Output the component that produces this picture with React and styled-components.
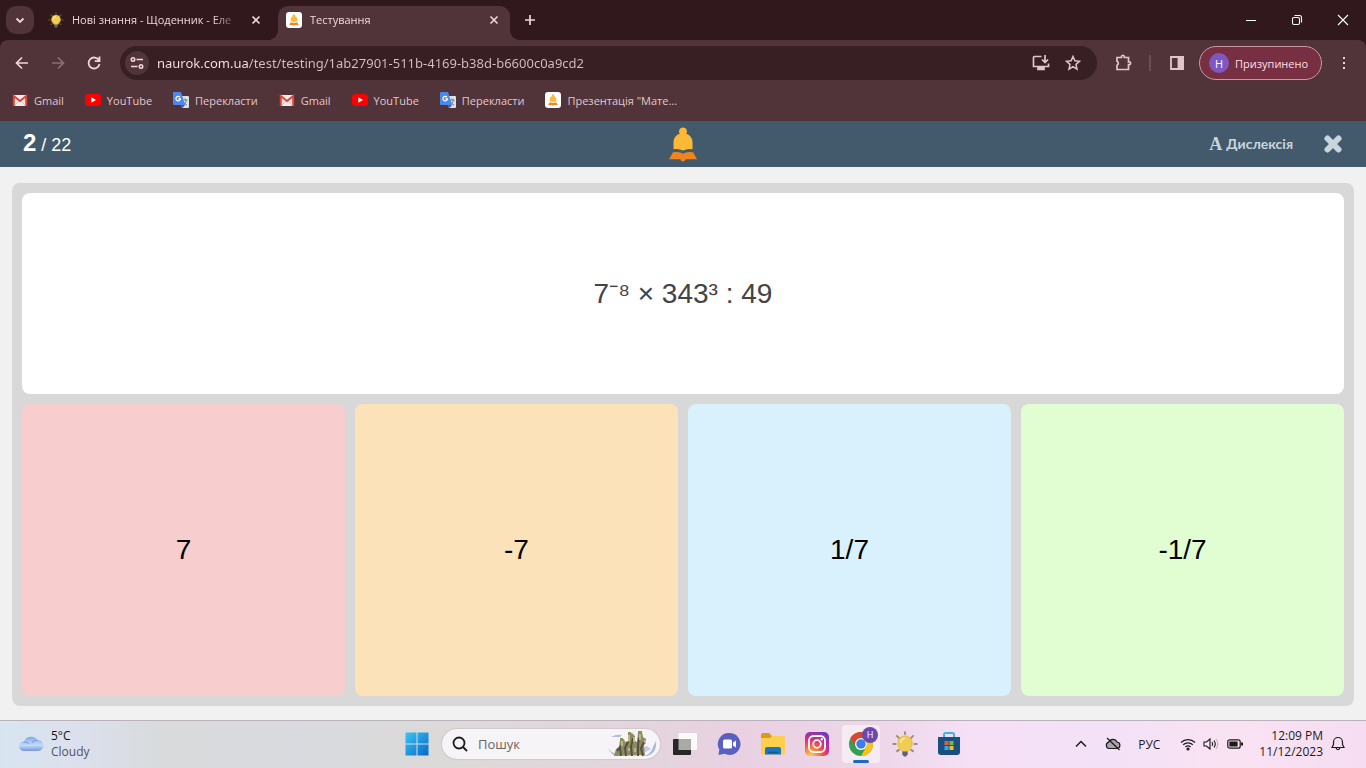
import React, { useState } from 'react';
import styled, { createGlobalStyle } from 'styled-components';

const GlobalStyle = createGlobalStyle`
  * {
    box-sizing: border-box;
  }

  body {
    margin: 0;
    font-family: 'Open Sans', 'Noto Sans', sans-serif;
    font-size: 12px;
  }

  button, input {
    font-family: inherit;
    font-size: inherit;
    color: inherit;
    border: 0;
    padding: 0;
    margin: 0;
    background: none;
    outline: none;
  }

  button {
    cursor: pointer;
  }

  svg {
    display: block;
    flex: none;
  }
`;

const Screen = styled.div`
  display: flex;
  flex-direction: column;
  min-height: 100vh;
  background: #f1f1f1;
`;

/* ---------- browser ---------- */

const Browser = styled.header`
  background: #30181d;
  color: #f0d5d9;
  font-size: 11px;
`;

const TabStrip = styled.div`
  display: flex;
  align-items: flex-end;
  height: 40px;
  padding-left: 6px;
`;

const TabSearch = styled.button`
  display: flex;
  align-items: center;
  justify-content: center;
  width: 28px;
  height: 28px;
  margin: 0 6px 6px 0;
  border-radius: 10px;
  background: #513439;
`;

const Tab = styled.div`
  position: relative;
  display: flex;
  align-items: center;
  gap: 8px;
  width: ${props => props.$active ? '232px' : '238px'};
  height: 34px;
  padding: ${props => props.$active ? '0 8px 6px' : '0 14px 6px 8px'};
  border-radius: 10px 10px 0 0;
  background: ${props => props.$active ? '#513439' : 'transparent'};

  &::before, &::after {
    content: '';
    display: ${props => props.$active ? 'block' : 'none'};
    position: absolute;
    bottom: 0;
    width: 10px;
    height: 10px;
  }

  &::before {
    left: -10px;
    background: radial-gradient(circle at 0 0, transparent 10px, #513439 10px);
  }

  &::after {
    right: -10px;
    background: radial-gradient(circle at 100% 0, transparent 10px, #513439 10px);
  }
`;

const TabTitle = styled.button`
  flex: 1;
  text-align: left;
  white-space: nowrap;
  line-height: 16px;
  mask-image: linear-gradient(90deg, #000 84%, transparent);
`;

const IconButton = styled.button`
  display: flex;
  align-items: center;
  justify-content: center;
  flex: none;
  width: ${props => props.$width || 16}px;
  height: ${props => props.$height || 16}px;
  color: ${props => props.$color || 'inherit'};
`;

const WindowControls = styled.div`
  display: flex;
  margin-left: auto;
  color: #fff;
`;

const Toolbar = styled.div`
  display: flex;
  align-items: center;
  height: 46px;
  padding: 6px 0 6px 4px;
  border-radius: 8px 8px 0 0;
  background: #513439;
`;

const AddressBar = styled.form`
  display: flex;
  align-items: center;
  flex: 1;
  height: 34px;
  margin: 0 10px 0 8px;
  padding: 0 8px 0 5px;
  border-radius: 17px;
  background: #371f24;
`;

const SiteInfo = styled.button`
  display: flex;
  align-items: center;
  justify-content: center;
  width: 24px;
  height: 24px;
  margin-right: 8px;
  border-radius: 50%;
  background: #513439;
`;

const AddressInput = styled.input`
  flex: 1;
  min-width: 0;
  height: 20px;
  font-family: 'Noto Sans', sans-serif;
  font-size: 13px;
  color: transparent;
  background: linear-gradient(90deg, #fbe6e9 92px, #d8bfc3 92px);
  background-clip: text;
`;

const Divider = styled.span`
  width: 2px;
  height: 16px;
  margin: 0 8px;
  background: #6f4b52;
`;

const Profile = styled.button`
  display: flex;
  align-items: center;
  gap: 6px;
  width: 123px;
  height: 34px;
  margin-left: 4px;
  padding: 0 9px;
  border: 1px solid #c79aa3;
  border-radius: 17px;
  background: #782f42;
  color: #ffdfe5;
  white-space: nowrap;
`;

const Avatar = styled.span`
  display: flex;
  align-items: center;
  justify-content: center;
  flex: none;
  width: 20px;
  height: 20px;
  border-radius: 50%;
  background: #7e57c2;
  color: #fff;
`;

const Bookmarks = styled.nav`
  display: flex;
  gap: 21px;
  height: 35px;
  padding: 6px 12px 0;
  background: #513439;
`;

const Bookmark = styled.a`
  display: flex;
  align-items: center;
  gap: 6px;
  height: 16px;
  color: #e0c8cb;
  text-decoration: none;
  white-space: nowrap;
`;

/* ---------- quiz ---------- */

const QuizHeader = styled.div`
  display: grid;
  grid-template-columns: 1fr auto 1fr;
  align-items: center;
  height: 46px;
  padding: 0 23px;
  background: #425a6b;
  color: #fff;
`;

const Counter = styled.div`
  font-family: 'Liberation Sans', Arial, sans-serif;
  font-size: 18px;
  line-height: 28px;

  strong {
    font-size: 24px;
  }
`;

const QuizActions = styled.div`
  display: flex;
  align-items: center;
  justify-content: flex-end;
  gap: 30px;
  color: #c9d5dd;
`;

const DyslexiaButton = styled.button`
  display: flex;
  align-items: center;
  gap: 4px;
  font-family: Lato, sans-serif;
  font-size: 14px;
  font-weight: 700;
  line-height: 16px;
`;

const SerifA = styled.span`
  font-family: 'Liberation Serif', serif;
  font-size: 18px;
`;

const Board = styled.main`
  display: grid;
  grid-template-rows: 201fr 292fr;
  gap: 10px;
  flex: 1;
  margin: 16px 12px 14px;
  padding: 10px;
  border-radius: 8px;
  background: #d8d8d8;
`;

const Question = styled.section`
  display: flex;
  align-items: center;
  justify-content: center;
  border-radius: 8px;
  background: #fff;
  color: #444;
  font-family: 'Liberation Sans', Arial, sans-serif;
  font-size: 28px;
  line-height: 32px;
`;

const Answers = styled.div`
  display: grid;
  grid-template-columns: repeat(4, 1fr);
  gap: 10px;
`;

const Answer = styled.button`
  border-radius: 8px;
  background: ${props => props.$color};
  color: #000;
  font-family: 'Liberation Sans', Arial, sans-serif;
  font-size: 28px;
`;

/* ---------- taskbar ---------- */

const Taskbar = styled.footer`
  display: grid;
  grid-template-columns: 1fr auto 1fr;
  align-items: center;
  height: 48px;
  box-shadow: inset 0 1px #b9b2ba;
  background: linear-gradient(90deg, #d8e5f1 0, #dce0ec 6%, #d8dadc 12%, #d8dadf 22%, #dcdad9 32%, #e3d5dc 46%, #e9d1e2 54%, #edd6e8 64%, #f6e0f6 71%, #f3e1f8 80%, #f9e3f2 90%, #f6ddf2 100%);
  color: #1b1b1b;
`;

const Weather = styled.button`
  display: flex;
  align-items: center;
  gap: 6px;
  padding-left: 18px;
  text-align: left;
  line-height: 16px;
`;

const WeatherText = styled.span`
  display: flex;
  flex-direction: column;
  color: #111;

  small {
    font-size: 12px;
    color: #50535c;
  }
`;

const Apps = styled.div`
  display: flex;
  align-items: center;
  gap: 6px;
`;

const AppButton = styled.button`
  position: relative;
  display: flex;
  align-items: center;
  justify-content: center;
  width: 38px;
  height: 38px;
  border-radius: 4px;
  background: ${props => props.$active ? '#f6ebf3' : 'transparent'};

  &::after {
    content: '';
    display: ${props => props.$active ? 'block' : 'none'};
    position: absolute;
    bottom: 0;
    width: 16px;
    height: 3px;
    border-radius: 2px;
    background: #1a6cc2;
  }
`;

const AppBadge = styled.span`
  position: absolute;
  top: 2px;
  right: 2px;
  width: 16px;
  height: 16px;
  border-radius: 50%;
  background: #6a48b0;
  color: #fff;
  font-size: 9px;
  line-height: 16px;
`;

const SearchBox = styled.label`
  display: flex;
  align-items: center;
  gap: 10px;
  width: 218px;
  height: 30px;
  padding: 0 2px 0 10px;
  border-radius: 15px;
  background: #f6f4f6;
  box-shadow: 0 0 1px 1px #cfc8cd;

  input {
    flex: 1;
    min-width: 0;
    font-size: 13px;
  }

  input::placeholder {
    color: #666;
    opacity: 1;
  }
`;

const Tray = styled.div`
  display: flex;
  align-items: center;
  justify-content: flex-end;
  padding-right: 18px;
`;

const Language = styled.button`
  width: 40px;
  margin-right: 8px;
`;

const Clock = styled.button`
  margin: 0 5px 0 12px;
  text-align: right;
  line-height: 16px;
  white-space: nowrap;
`;

/* ---------- icons ---------- */

const Stroke = ({ size = 16, width = 1.5, children, ...rest }) => (
    <svg width={size} height={size} viewBox={`0 0 ${size} ${size}`} fill="none" stroke="currentColor" strokeWidth={width} {...rest}>
        {children}
    </svg>
);

const CloseIcon = () => <Stroke width={1.6}><path d="M4.500 4.500l7 7M11.500 4.500l-7 7" /></Stroke>;

const BulbIcon = ({ size = 16, rays = '#6b5a20' }) => (
    <svg width={size} height={size} viewBox="0 0 24 24">
        <path d="M12 .5v3M4 4l3 3M20 4l-3 3M.5 12h3.500M20 12h3.500M4 19l3-2M20 19l-3-2" stroke={rays} strokeWidth="1.800" />
        <path d="M12 4.500a6.800 6.800 0 0 0-4 12.300l1.500 2.200h5l1.500-2.200a6.800 6.800 0 0 0-4-12.300z" fill="#f0cd52" stroke="#d8ae3c" strokeWidth=".6" />
        <path d="M12 7a4 4 0 0 0-4 4" stroke="#fff0a5" strokeWidth="1.400" fill="none" />
        <path d="M9.500 19h5v2.400L13 23.500h-2l-1.500-2.100z" fill="#5b6573" />
    </svg>
);

const BellShape = () => (
    <>
        <path d="M14 .5a3.900 3.900 0 0 0-3.200 6.200C6.800 8 4.500 11 4.500 15.500v6.800q5-1 9.500 1.200 4.500-2.200 9.500-1.200v-6.800c0-4.500-2.300-7.500-6.300-8.800A3.900 3.900 0 0 0 14 .5z" fill="#fdb933" />
        <path d="M4 25.300q6.500-1.300 10 1.400 3.500-2.700 10-1.400L28 32.300h-11.500c0 1.200-1 2.200-2.500 2.200s-2.500-1-2.500-2.200H0z" fill="#f08420" />
    </>
);

const NaurokLogo = () => <svg width="28" height="35" viewBox="0 0 28 35"><BellShape /></svg>;

const NaurokIcon = () => (
    <svg width="16" height="16" viewBox="0 0 16 16">
        <rect width="16" height="16" rx="3" fill="#fff" />
        <g transform="translate(3.200 2) scale(.34)"><BellShape /></g>
    </svg>
);

const GmailIcon = () => (
    <svg width="16" height="16" viewBox="0 0 16 16">
        <path d="M1 3h14v11H1z" fill="#f2e9e9" />
        <path d="M3 13l4-4M13 13L9 9" stroke="#d3c6c7" />
        <path d="M1.800 14V4L8 9l6.200-5v10" fill="none" stroke="#dc4437" strokeWidth="2" />
    </svg>
);

const YoutubeIcon = () => (
    <svg width="16" height="16" viewBox="0 0 16 16">
        <rect y="2" width="16" height="12" rx="3.500" fill="#f00" />
        <path d="M6.300 5.300v5.400L11 8z" fill="#fff" />
    </svg>
);

const TranslateIcon = () => (
    <svg width="16" height="16" viewBox="0 0 16 16">
        <path d="M6 4h9a1 1 0 0 1 1 1v10a1 1 0 0 1-1 1H9z" fill="#dde1e5" />
        <path d="M9.500 8h5M12 6.500V8M13.500 8c-.5 2.500-2 4-3.500 5M10.500 9.500c.5 1.500 2 3 3.500 3.500" stroke="#6b7d8c" fill="none" />
        <path d="M1 0h7l4 13H1a1 1 0 0 1-1-1V1a1 1 0 0 1 1-1z" fill="#4b87ee" />
        <path d="M7 5.200a2.300 2.300 0 1 0 .5 1.600H5.300" stroke="#fff" fill="none" strokeWidth="1.200" />
        <path d="M8 13h4l-2.500 3z" fill="#2d5cbc" />
    </svg>
);

const CloudIcon = () => (
    <svg width="27" height="20" viewBox="0 0 27 20">
        <defs>
            <linearGradient id="cloud" x1="0" y1="0" x2="0" y2="1">
                <stop offset="0" stopColor="#84a8e8" />
                <stop offset=".6" stopColor="#c4dcfa" />
                <stop offset="1" stopColor="#7796d6" />
            </linearGradient>
        </defs>
        <path d="M6 17a4.700 4.700 0 0 1-.3-9.400A8 8 0 0 1 19.500 6 5.500 5.500 0 0 1 20.500 17z" fill="url(#cloud)" />
        <path d="M5.500 8.500c2.500-.6 4.500.3 5.500 1.500M14 9c1-2 3-3 5.500-2.500" stroke="#7199df" fill="none" />
    </svg>
);

const WindowsIcon = () => (
    <svg width="24" height="24" viewBox="0 0 24 24">
        <defs>
            <linearGradient id="win" x1="0" y1="0" x2="1" y2="1">
                <stop offset="0" stopColor="#3cc4f5" />
                <stop offset="1" stopColor="#0768c8" />
            </linearGradient>
        </defs>
        <path d="M.5.5h11v11H.5zM12.500.5h11v11h-11zM.5 12.500h11v11H.5zM12.500 12.500h11v11h-11z" fill="url(#win)" />
    </svg>
);

const CastleArt = () => (
    <svg width="50" height="26" viewBox="0 0 50 26">
        <path d="M3 6q5-3 11-2l-2 2zM0 17q4 6 11 6l-2 2Q3 24 0 17z" fill="#b3bcd4" />
        <path d="M33 25c7 0 11-4 12-9l3-6c1 8-3 15-11 15z" fill="#a3b9de" />
        <path d="M33 18l6-3 4 3-5 3z" fill="#c3cde2" />
        <path d="M6 25l2-7 3-2 1-7 4-1 1 3 3-1V3l4-1 3 3v5l2 1 1-9 4-1 1 5 3 2v4l-2 2 1 10z" fill="#8d8a63" />
        <path d="M9 20l3-4 1 9M18 25l-1-8 3-6M24 25l-1-9 2-9M30 25V14l1-7M35 25l-2-8 3-6" fill="none" stroke="#56513f" strokeWidth="2" />
        <path d="M14 10v5M21 4v6M26 6v5M32 3v6M37 9v3M21 17v3M27 17v4" stroke="#b9b889" strokeWidth="2" />
        <path d="M20 2h3M30 1h4M12 8h3" stroke="#7c9a4b" strokeWidth="2" />
    </svg>
);

const TaskViewIcon = () => (
    <svg width="24" height="24" viewBox="0 0 24 24">
        <rect x="5.500" y="1" width="18.500" height="17" rx="1" fill="#fafafa" />
        <rect x="0" y="7" width="18" height="16" rx="1" fill="#272727" />
        <path d="M5.500 7H18v11H5.500z" fill="#a9a9a8" />
    </svg>
);

const ChatIcon = () => (
    <svg width="24" height="24" viewBox="0 0 24 24">
        <path d="M12.500 1a11 11 0 1 1-5 20.800L1.500 23l.8-5.500A11 11 0 0 1 12.500 1z" fill="#5b5fc0" />
        <rect x="6" y="7.500" width="9" height="9" rx="1.500" fill="#fff" />
        <path d="M16 10.500l3-2v7l-3-2z" fill="#fff" />
    </svg>
);

const ExplorerIcon = () => (
    <svg width="26" height="24" viewBox="0 0 26 24">
        <path d="M1 3a2 2 0 0 1 2-2h6l3 3v6H1z" fill="#d99b1b" />
        <path d="M1 6h9l2-2h11a2 2 0 0 1 2 2v15a1.500 1.500 0 0 1-1.500 1.500h-21A1.500 1.500 0 0 1 1 21z" fill="#fcd04f" />
        <path d="M5 22.500V17a2 2 0 0 1 2-2h12a2 2 0 0 1 2 2v5.500z" fill="#1975bd" />
        <path d="M8 20.500h10" stroke="#0c5994" strokeWidth="1.500" />
    </svg>
);

const InstagramIcon = () => (
    <svg width="24" height="24" viewBox="0 0 24 24">
        <defs>
            <radialGradient id="insta" cx=".25" cy="1" r="1.100">
                <stop offset="0" stopColor="#fdd05a" />
                <stop offset=".4" stopColor="#f2633c" />
                <stop offset=".65" stopColor="#d22e87" />
                <stop offset="1" stopColor="#7138c5" />
            </radialGradient>
        </defs>
        <rect width="24" height="24" rx="5" fill="url(#insta)" />
        <rect x="4" y="4" width="16" height="16" rx="4.500" fill="none" stroke="#fff" strokeWidth="1.800" />
        <circle cx="12" cy="12" r="3.800" fill="none" stroke="#fff" strokeWidth="1.800" />
        <circle cx="16.800" cy="7.200" r="1.200" fill="#fff" />
    </svg>
);

const ChromeIcon = () => (
    <svg width="24" height="24" viewBox="0 0 24 24">
        <circle cx="12" cy="12" r="12" fill="#34a053" />
        <path d="M1.600 6A12 12 0 0 1 22.400 6H12a6 6 0 0 0-5.200 9z" fill="#e1412f" />
        <path d="M22.400 6A12 12 0 0 1 12 24l5.200-9A6 6 0 0 0 12 6z" fill="#fbc116" />
        <circle cx="12" cy="12" r="6" fill="#fff" />
        <circle cx="12" cy="12" r="4.700" fill="#3b7ded" />
    </svg>
);

const StoreIcon = () => (
    <svg width="24" height="24" viewBox="0 0 24 24">
        <path d="M7 6V2.500A1.500 1.500 0 0 1 8.500 1h7A1.500 1.500 0 0 1 17 2.500V6" fill="none" stroke="#3cb4ea" strokeWidth="2" />
        <path d="M1 5h22v15a3 3 0 0 1-3 3H4a3 3 0 0 1-3-3z" fill="#185080" />
        <path d="M7.500 9h4v4h-4z" fill="#ec5a37" />
        <path d="M12.500 9h4v4h-4z" fill="#7fba32" />
        <path d="M7.500 14h4v4h-4z" fill="#31a8ec" />
        <path d="M12.500 14h4v4h-4z" fill="#fbbc2c" />
    </svg>
);

/* ---------- data ---------- */

const bookmarks = [
    { title: 'Gmail', Icon: GmailIcon },
    { title: 'YouTube', Icon: YoutubeIcon },
    { title: 'Перекласти', Icon: TranslateIcon },
    { title: 'Gmail', Icon: GmailIcon },
    { title: 'YouTube', Icon: YoutubeIcon },
    { title: 'Перекласти', Icon: TranslateIcon },
    { title: 'Презентація "Мате...', Icon: NaurokIcon },
];

const answers = [
    { text: '7', color: '#f7cdcd' },
    { text: '-7', color: '#fce2b9' },
    { text: '1/7', color: '#d9f1fc' },
    { text: '-1/7', color: '#e0fed2' },
];

function BrowserBar() {
    const [url, setUrl] = useState('naurok.com.ua/test/testing/1ab27901-511b-4169-b38d-b6600c0a9cd2');

    return (
        <Browser>
            <TabStrip>
                <TabSearch aria-label="Search tabs"><Stroke width={1.8}><path d="M4.500 6.500L8 10l3.500-3.500" /></Stroke></TabSearch>
                <Tab>
                    <BulbIcon />
                    <TabTitle>Нові знання - Щоденник - Еле</TabTitle>
                    <IconButton aria-label="Close tab"><CloseIcon /></IconButton>
                </Tab>
                <Tab $active>
                    <NaurokIcon />
                    <TabTitle>Тестування</TabTitle>
                    <IconButton aria-label="Close tab"><CloseIcon /></IconButton>
                </Tab>
                <IconButton $width={40} $height={40} aria-label="New tab"><Stroke width={1.7}><path d="M8 3v10M3 8h10" /></Stroke></IconButton>
                <WindowControls>
                    <IconButton $width={46} $height={40} aria-label="Minimize"><Stroke width={1}><path d="M3 8.500h10" /></Stroke></IconButton>
                    <IconButton $width={46} $height={40} aria-label="Restore">
                        <Stroke width={1.1}><rect x="3.500" y="5.500" width="7" height="7" rx="1.500" /><path d="M5.500 3.500h5a2 2 0 0 1 2 2v5" /></Stroke>
                    </IconButton>
                    <IconButton $width={46} $height={40} aria-label="Close"><Stroke width={1.1}><path d="M3 3l10 10M13 3L3 13" /></Stroke></IconButton>
                </WindowControls>
            </TabStrip>
            <Toolbar>
                <IconButton $width={36} $height={34} aria-label="Back"><Stroke width={1.7}><path d="M14 8H3M8 2.500L2.500 8 8 13.500" /></Stroke></IconButton>
                <IconButton $width={36} $height={34} $color="#8e6d73" aria-label="Forward"><Stroke width={1.7}><path d="M2 8h11M8 2.500l5.500 5.500L8 13.500" /></Stroke></IconButton>
                <IconButton $width={36} $height={34} aria-label="Reload"><Stroke width={1.8}><path d="M13 5.500A5.500 5.500 0 1 0 13.500 9M13.500 1.500v4.700H8.800" /></Stroke></IconButton>
                <AddressBar>
                    <SiteInfo type="button" aria-label="Site information">
                        <Stroke width={1.6}><circle cx="4" cy="4.500" r="1.700" /><circle cx="12" cy="11.500" r="1.700" /><path d="M7.500 4.500H14M2 11.500h6.500" /></Stroke>
                    </SiteInfo>
                    <AddressInput aria-label="Address" value={url} onChange={e => setUrl(e.target.value)} />
                    <IconButton type="button" $width={32} $height={34} $color="#e3c4c9" aria-label="Install">
                        <Stroke size={18} width={1.7}><path d="M9.500 2.500H2.500a1 1 0 0 0-1 1v9h15v-3M13 1v7M10 5.500l3 3 3-3" /><path d="M6 13.500h6v2H6z" fill="currentColor" /></Stroke>
                    </IconButton>
                    <IconButton type="button" $width={32} $height={34} $color="#e3c4c9" aria-label="Bookmark this page">
                        <Stroke><path d="M8 1.500l1.900 4.300 4.700.5L11 9.400l1 4.700-4-2.500-4 2.500 1-4.700L1.400 6.300l4.700-.5z" /></Stroke>
                    </IconButton>
                </AddressBar>
                <IconButton $width={34} $height={34} $color="#e3c4c9" aria-label="Extensions">
                    <Stroke size={18} width={1.7}><path d="M2 3.500h4.500V2.200a1.500 1.500 0 0 1 2.800 0v1.300h4.200v4.300h1a1.500 1.500 0 0 1 0 2.900h-1v4.800H2v-4.200a2.200 2.200 0 0 0 0-4z" /></Stroke>
                </IconButton>
                <Divider />
                <IconButton $width={36} $height={34} $color="#e3c4c9" aria-label="Side panel">
                    <Stroke width={1.8}><path d="M2 2h12v12H2z" /><path d="M9.500 2H14v12H9.500z" fill="currentColor" /></Stroke>
                </IconButton>
                <Profile><Avatar>Н</Avatar>Призупинено</Profile>
                <IconButton $width={44} $height={34} aria-label="Menu">
                    <Stroke><path d="M7 2h2v2H7zM7 7h2v2H7zM7 12h2v2H7z" fill="currentColor" stroke="none" /></Stroke>
                </IconButton>
            </Toolbar>
            <Bookmarks>
                {bookmarks.map(({ title, Icon }, idx) => (
                    <Bookmark href="#" key={idx}><Icon />{title}</Bookmark>
                ))}
            </Bookmarks>
        </Browser>
    );
}

function WindowsTaskbar() {
    return (
        <Taskbar>
            <Weather>
                <CloudIcon />
                <WeatherText>5°C<small>Cloudy</small></WeatherText>
            </Weather>
            <Apps>
                <AppButton aria-label="Start"><WindowsIcon /></AppButton>
                <SearchBox>
                    <Stroke width={1.8}><circle cx="7" cy="7" r="5.500" /><path d="M11 11l4 4" /></Stroke>
                    <input placeholder="Пошук" aria-label="Пошук" />
                    <CastleArt />
                </SearchBox>
                <AppButton aria-label="Task view"><TaskViewIcon /></AppButton>
                <AppButton aria-label="Chat"><ChatIcon /></AppButton>
                <AppButton aria-label="Explorer"><ExplorerIcon /></AppButton>
                <AppButton aria-label="Instagram"><InstagramIcon /></AppButton>
                <AppButton $active aria-label="Chrome"><ChromeIcon /><AppBadge>Н</AppBadge></AppButton>
                <AppButton aria-label="Нові знання"><BulbIcon size={26} rays="#a48d6c" /></AppButton>
                <AppButton aria-label="Store"><StoreIcon /></AppButton>
            </Apps>
            <Tray>
                <IconButton $width={32} $height={32} aria-label="Hidden icons"><Stroke><path d="M3 10.500l5-5 5 5" /></Stroke></IconButton>
                <IconButton $width={32} $height={32} aria-label="OneDrive">
                    <Stroke width={1.2}><path d="M4 12.500a3.300 3.300 0 0 1-.3-6.400A4.500 4.500 0 0 1 12 6a3.300 3.300 0 0 1 .3 6.500z" fill="#aaa4aa" /><path d="M2 2l12.500 12" /></Stroke>
                </IconButton>
                <Language>РУС</Language>
                <IconButton $width={22} $height={32} aria-label="Wi-Fi">
                    <Stroke width={1.2}><path d="M1 6.500a10 10 0 0 1 14 0M3.200 8.800a7 7 0 0 1 9.600 0M5.400 11a4 4 0 0 1 5.200 0" /><circle cx="8" cy="13" r="1" fill="currentColor" /></Stroke>
                </IconButton>
                <IconButton $width={24} $height={32} aria-label="Volume">
                    <Stroke width={1.1}><path d="M1 6h2.500L7 3v10L3.500 10H1zM9 6q1.500 2 0 4M11 4.500q2.500 3.500 0 7" /><path d="M13 3q3.500 5 0 10" stroke="#c5b6c2" /></Stroke>
                </IconButton>
                <IconButton $width={24} $height={32} aria-label="Battery">
                    <Stroke width={1.2}><rect x=".8" y="3.800" width="12.400" height="8.400" rx="2" /><path d="M3 6h7v4H3z" fill="currentColor" /><path d="M15 6.500v3" strokeWidth="2" /></Stroke>
                </IconButton>
                <Clock>12:09 PM<br />11/12/2023</Clock>
                <IconButton $width={20} $height={32} aria-label="Notifications">
                    <Stroke width={1.2}><path d="M2 11.500l1.500-3V6a4.500 4.500 0 0 1 9 0v2.500l1.500 3zM6 12q2 3.500 4 0" /></Stroke>
                </IconButton>
            </Tray>
        </Taskbar>
    );
}

export default function App() {
    return (
        <Screen>
            <GlobalStyle />
            <BrowserBar />
            <QuizHeader>
                <Counter><strong>2</strong> / 22</Counter>
                <NaurokLogo />
                <QuizActions>
                    <DyslexiaButton><SerifA>A</SerifA>Дислексія</DyslexiaButton>
                    <IconButton $width={20} $height={20} aria-label="Завершити">
                        <Stroke size={20} width={6} strokeLinecap="round"><path d="M4.500 4.500l11 11M15.500 4.500l-11 11" /></Stroke>
                    </IconButton>
                </QuizActions>
            </QuizHeader>
            <Board>
                <Question>7⁻⁸ × 343³ : 49</Question>
                <Answers>
                    {answers.map(answer => (
                        <Answer key={answer.text} $color={answer.color}>{answer.text}</Answer>
                    ))}
                </Answers>
            </Board>
            <WindowsTaskbar />
        </Screen>
    );
}
